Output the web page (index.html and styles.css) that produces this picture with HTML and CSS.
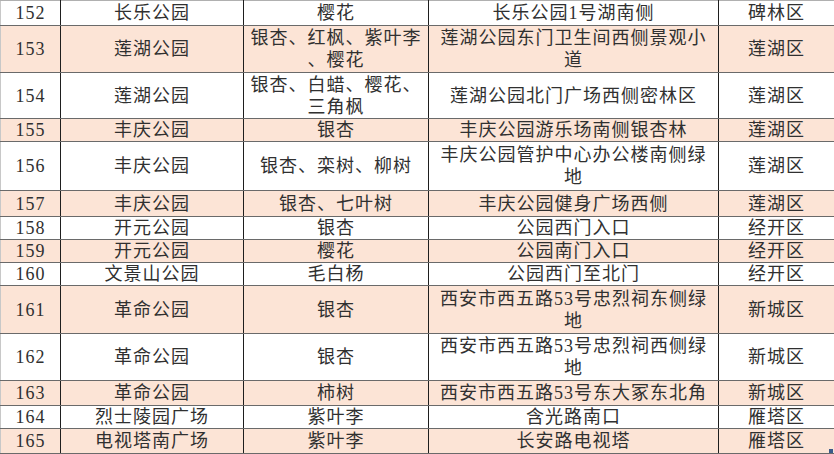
FILE: index.html
```html
<!DOCTYPE html>
<html lang="zh-CN">
<head>
<meta charset="utf-8">
<title>公园观赏树木</title>
<link rel="stylesheet" href="styles.css">
</head>
<body>
<div class="sheet">
<table class="grid">
<colgroup>
<col class="c-no"><col class="c-park"><col class="c-tree"><col class="c-loc"><col class="c-dist">
</colgroup>
<tbody>
<tr class="h25"><td>152</td><td>长乐公园</td><td>樱花</td><td>长乐公园1号湖南侧</td><td>碑林区</td></tr>
<tr class="h47 alt"><td>153</td><td>莲湖公园</td><td class="anybreak">银杏、红枫、紫叶李、樱花</td><td>莲湖公园东门卫生间西侧景观小道</td><td>莲湖区</td></tr>
<tr class="h46"><td>154</td><td>莲湖公园</td><td>银杏、白蜡、樱花、三角枫</td><td>莲湖公园北门广场西侧密林区</td><td>莲湖区</td></tr>
<tr class="h23 alt"><td>155</td><td>丰庆公园</td><td>银杏</td><td>丰庆公园游乐场南侧银杏林</td><td>莲湖区</td></tr>
<tr class="h49"><td>156</td><td>丰庆公园</td><td>银杏、栾树、柳树</td><td>丰庆公园管护中心办公楼南侧绿地</td><td>莲湖区</td></tr>
<tr class="h26 alt"><td>157</td><td>丰庆公园</td><td>银杏、七叶树</td><td>丰庆公园健身广场西侧</td><td>莲湖区</td></tr>
<tr class="h23"><td>158</td><td>开元公园</td><td>银杏</td><td>公园西门入口</td><td>经开区</td></tr>
<tr class="h22 alt"><td>159</td><td>开元公园</td><td>樱花</td><td>公园南门入口</td><td>经开区</td></tr>
<tr class="h23"><td>160</td><td>文景山公园</td><td>毛白杨</td><td>公园西门至北门</td><td>经开区</td></tr>
<tr class="h48 alt"><td>161</td><td>革命公园</td><td>银杏</td><td>西安市西五路53号忠烈祠东侧绿地</td><td>新城区</td></tr>
<tr class="h47"><td>162</td><td>革命公园</td><td>银杏</td><td>西安市西五路53号忠烈祠西侧绿地</td><td>新城区</td></tr>
<tr class="h25 alt"><td>163</td><td>革命公园</td><td>柿树</td><td>西安市西五路53号东大冢东北角</td><td>新城区</td></tr>
<tr class="h23"><td>164</td><td>烈士陵园广场</td><td>紫叶李</td><td>含光路南口</td><td>雁塔区</td></tr>
<tr class="h25 alt"><td>165</td><td>电视塔南广场</td><td>紫叶李</td><td>长安路电视塔</td><td>雁塔区</td></tr>
</tbody>
</table>
<span class="fill-handle"></span>
</div>
</body>
</html>
```
FILE: styles.css
```css
html, body {
  margin: 0;
  padding: 0;
  background: #ffffff;
}

.sheet {
  position: relative;
  width: 834px;
  height: 454px;
  overflow: hidden;
}

.grid {
  border-collapse: collapse;
  table-layout: fixed;
  width: 834px;
  font-family: "Liberation Serif", "Noto Sans CJK SC", serif;
  font-size: 18px;
  letter-spacing: 1px;
  color: #303030;
}

.c-no { width: 60px; }
.c-park { width: 183px; }
.c-tree { width: 185px; }
.c-loc { width: 290px; }
.c-dist { width: 116px; }

.grid td {
  border-top: 1px solid #6a6a6a;
  border-bottom: 1px solid #6a6a6a;
  border-left: 1px solid #1e1e1e;
  border-right: 1px solid #1e1e1e;
  padding: 0 4px;
  text-align: center;
  vertical-align: middle;
  line-height: 22px;
  overflow: hidden;
}

.grid td:first-child {
  border-left-color: #c8c8c8;
  padding: 0;
}

.grid td:last-child {
  border-right-color: #c8c8c8;
}

.grid tr:first-child td {
  border-top-color: #b0b0b0;
}

.grid .alt td {
  background: #fce4d6;
}

.anybreak {
  line-break: anywhere;
}

.h22 { height: 22px; }
.h23 { height: 23px; }
.h25 { height: 25px; }
.h26 { height: 26px; }
.h46 { height: 46px; }
.h47 { height: 47px; }
.h48 { height: 48px; }
.h49 { height: 49px; }

.fill-handle {
  position: absolute;
  left: 829px;
  top: 449px;
  width: 4px;
  height: 4px;
  background: #3a5a8a;
}
```
